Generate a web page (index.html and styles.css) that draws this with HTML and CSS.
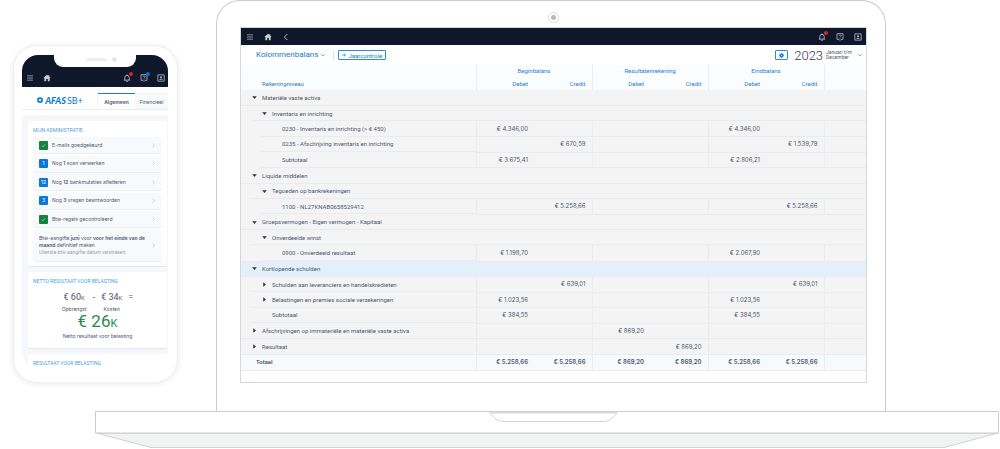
FILE: index.html
```html
<!DOCTYPE html>
<html lang="nl">
<head>
    <meta charset="UTF-8">
    <meta name="viewport" content="width=device-width, initial-scale=1.0">
    <title>AFAS SB+ Kolommenbalans</title>
    <link rel="stylesheet" href="styles.css">
</head>
<body>
    <!-- shared icons -->
    <svg class="sprite" width="0" height="0">
        <symbol id="i-menu" viewBox="0 0 24 24"><path d="M3 5.500h18M3 12h18M3 18.500h18" fill="none" stroke="currentColor" stroke-width="2"/></symbol>
        <symbol id="i-home" viewBox="0 0 24 24"><path d="M12 2 1 12h3v9.500h5.500V15h5v6.500H20V12h3l-4-3.700V3.500h-3v2.100z" fill="currentColor"/></symbol>
        <symbol id="i-back" viewBox="0 0 24 24"><path d="M16 3 7 12l9 9" fill="none" stroke="currentColor" stroke-width="2.500"/></symbol>
        <symbol id="i-next" viewBox="0 0 24 24"><path d="m8 3 9 9-9 9" fill="none" stroke="currentColor" stroke-width="2.500"/></symbol>
        <symbol id="i-down" viewBox="0 0 24 24"><path d="m2 7 10 10L22 7" fill="none" stroke="currentColor" stroke-width="4"/></symbol>
        <symbol id="i-bell" viewBox="0 0 24 24"><path d="M2.500 18.500h19M5.500 18v-7.500a6.500 6.500 0 0 1 13 0V18M12 4V1.500M9.500 22h5" fill="none" stroke="currentColor" stroke-width="2.400"/></symbol>
        <symbol id="i-help" viewBox="0 0 24 24"><path d="M3 2h18v17h-5.500L12 22.500 8.500 19H3z" fill="none" stroke="currentColor" stroke-width="2.200"/><path d="M9 8.500c0-4 6.500-4 6.500-.3 0 2.500-3.300 2.300-3.300 5M12.200 15v2" fill="none" stroke="currentColor" stroke-width="2"/></symbol>
        <symbol id="i-user" viewBox="0 0 24 24"><path d="M2.500 2.500h19v19h-19z" fill="none" stroke="currentColor" stroke-width="2.200"/><circle cx="12" cy="9.500" r="2.800" fill="currentColor"/><path d="M7 17.500c0-4.500 10-4.500 10 0z" fill="currentColor"/></symbol>
        <symbol id="i-check" viewBox="0 0 24 24"><path d="m4 13 5 5L20 6" fill="none" stroke="currentColor" stroke-width="2.500"/></symbol>
        <symbol id="i-arrow" viewBox="0 0 24 24"><path d="M1 12h19M12 4l9 8-9 8" fill="none" stroke="currentColor" stroke-width="4"/></symbol>
        <symbol id="i-gear" viewBox="0 0 24 24"><circle cx="12" cy="12" r="6.500" fill="none" stroke="currentColor" stroke-width="7"/><path d="M12 0v5M12 19v5M0 12h5M19 12h5M3.500 3.500 7 7M17 17l3.500 3.500M20.500 3.500 17 7M7 17l-3.500 3.500" stroke="currentColor" stroke-width="3.500"/></symbol>
        <symbol id="i-open" viewBox="0 0 24 24"><path d="M1 6h22L12 19z" fill="currentColor"/></symbol>
        <symbol id="i-closed" viewBox="0 0 24 24"><path d="M6 1v22l13-11z" fill="currentColor"/></symbol>
    </svg>

    <div class="devices">
        <div class="phone">
            <div class="phone-screen">
                <header class="phone-nav">
                    <div class="notch"><span class="speaker"></span><span class="lens"></span></div>
                    <nav class="nav-icons">
                        <button class="icon-btn" aria-label="Menu"><svg><use href="#i-menu"/></svg></button>
                        <button class="icon-btn" aria-label="Home"><svg><use href="#i-home"/></svg></button>
                        <span class="spacer"></span>
                        <button class="icon-btn" aria-label="Meldingen"><svg><use href="#i-bell"/></svg><span class="dot red"></span></button>
                        <button class="icon-btn" aria-label="Help"><svg><use href="#i-help"/></svg><span class="dot blue"></span></button>
                        <button class="icon-btn" aria-label="Profiel"><svg><use href="#i-user"/></svg></button>
                    </nav>
                </header>
                <div class="tabs">
                    <div class="logo">
                        <svg viewBox="0 0 24 24"><circle cx="12" cy="12" r="8.500" fill="none" stroke="currentColor" stroke-width="6"/><path d="M12 0v6M12 18v6M2 6l5 3M17 15l5 3M22 6l-5 3M7 15l-5 3" stroke="currentColor" stroke-width="3"/><circle cx="12" cy="12" r="2" fill="currentColor"/></svg>
                        <strong>AFAS</strong><span>SB+</span>
                    </div>
                    <button class="tab active">Algemeen</button>
                    <button class="tab">Financieel</button>
                </div>
                <main class="feed">
                    <section class="card">
                        <h2>MIJN ADMINISTRATIE</h2>
                        <div class="tasks">
                            <button class="task"><span class="badge done"><svg><use href="#i-check"/></svg></span><span class="task-text">E-mails goedgekeurd</span><svg class="chev"><use href="#i-next"/></svg></button>
                            <button class="task"><span class="badge">1</span><span class="task-text">Nog <b>1</b> scan verwerken</span><svg class="chev"><use href="#i-next"/></svg></button>
                            <button class="task"><span class="badge">12</span><span class="task-text">Nog <b>12</b> bankmutaties afletteren</span><svg class="chev"><use href="#i-next"/></svg></button>
                            <button class="task"><span class="badge">3</span><span class="task-text">Nog <b>3</b> vragen beantwoorden</span><svg class="chev"><use href="#i-next"/></svg></button>
                            <button class="task"><span class="badge done"><svg><use href="#i-check"/></svg></span><span class="task-text">Btw-regels gecontroleerd</span><svg class="chev"><use href="#i-next"/></svg></button>
                            <button class="task tall"><span class="task-text">Btw-aangifte <b>juni</b> voor <b>voor het einde van de</b><br><b>maand</b> definitief maken<small>Uiterste btw aangifte datum verstreken.</small></span><svg class="chev"><use href="#i-next"/></svg></button>
                        </div>
                    </section>
                    <section class="card result">
                        <h2>NETTO RESULTAAT VOOR BELASTING</h2>
                        <div class="sum">
                            <div><p class="amount">€ 60<small>K</small></p><p>Opbrengst</p></div>
                            <span class="amount">-</span>
                            <div><p class="amount">€ 34<small>K</small></p><p>Kosten</p></div>
                            <span class="amount">=</span>
                        </div>
                        <p class="total">€ 26<small>K</small></p>
                        <p>Netto resultaat voor belasting</p>
                    </section>
                    <section class="card">
                        <h2>RESULTAAT VOOR BELASTING</h2>
                    </section>
                </main>
            </div>
        </div>

        <div class="lid">
            <span class="camera"></span>
            <div class="screen">
                <nav class="nav-icons desktop-nav">
                    <button class="icon-btn" aria-label="Menu"><svg><use href="#i-menu"/></svg></button>
                    <button class="icon-btn" aria-label="Home"><svg><use href="#i-home"/></svg></button>
                    <button class="icon-btn" aria-label="Terug"><svg><use href="#i-back"/></svg></button>
                    <span class="spacer"></span>
                    <button class="icon-btn" aria-label="Meldingen"><svg><use href="#i-bell"/></svg><span class="dot red"></span></button>
                    <button class="icon-btn" aria-label="Help"><svg><use href="#i-help"/></svg></button>
                    <button class="icon-btn" aria-label="Profiel"><svg><use href="#i-user"/></svg></button>
                </nav>
                <div class="toolbar">
                    <button class="title">Kolommenbalans <svg><use href="#i-down"/></svg></button>
                    <button class="outline"><svg><use href="#i-arrow"/></svg>Jaarcontrole</button>
                    <span class="spacer"></span>
                    <button class="outline gear" aria-label="Instellingen"><svg><use href="#i-gear"/></svg></button>
                    <button class="period"><span class="year">2023</span><span class="months">Januari t/m<br>December</span><svg><use href="#i-down"/></svg></button>
                </div>
                <table>
                    <colgroup><col class="c-name"><col><col><col><col><col><col><col class="c-end"></colgroup>
                    <thead>
                        <tr><th></th><th colspan="2" class="group">Beginbalans</th><th colspan="2" class="group">Resultatenrekening</th><th colspan="2" class="group">Eindbalans</th><th></th></tr>
                        <tr><th class="name">Rekeningniveau</th><th>Debet</th><th>Credit</th><th>Debet</th><th>Credit</th><th>Debet</th><th>Credit</th><th></th></tr>
                    </thead>
                    <tbody>
                        <tr><td class="l1" colspan="8"><button class="toggle"><svg><use href="#i-open"/></svg>Materiële vaste activa</button></td></tr>
                        <tr><td class="l2" colspan="8"><button class="toggle"><svg><use href="#i-open"/></svg>Inventaris en inrichting</button></td></tr>
                        <tr><td class="l3">0230 - Inventaris en inrichting (&gt; € 450)</td><td>€ 4.346,00</td><td></td><td></td><td></td><td>€ 4.346,00</td><td></td><td></td></tr>
                        <tr><td class="l3">0235 - Afschrijving inventaris en inrichting</td><td></td><td>€ 670,59</td><td></td><td></td><td></td><td>€ 1.539,79</td><td></td></tr>
                        <tr><td class="l3">Subtotaal</td><td>€ 3.675,41</td><td></td><td></td><td></td><td>€ 2.806,21</td><td></td><td></td></tr>
                        <tr><td class="l1" colspan="8"><button class="toggle"><svg><use href="#i-open"/></svg>Liquide middelen</button></td></tr>
                        <tr><td class="l2" colspan="8"><button class="toggle"><svg><use href="#i-open"/></svg>Tegoeden op bankrekeningen</button></td></tr>
                        <tr><td class="l3">1100 - NL27KNAB0658529412</td><td></td><td>€ 5.258,66</td><td></td><td></td><td></td><td>€ 5.258,66</td><td></td></tr>
                        <tr><td class="l1" colspan="8"><button class="toggle"><svg><use href="#i-open"/></svg>Groepsvermogen - Eigen vermogen - Kapitaal</button></td></tr>
                        <tr><td class="l2" colspan="8"><button class="toggle"><svg><use href="#i-open"/></svg>Onverdeelde winst</button></td></tr>
                        <tr><td class="l3">0900 - Onverdeeld resultaat</td><td>€ 1.198,70</td><td></td><td></td><td></td><td>€ 2.067,90</td><td></td><td></td></tr>
                        <tr class="selected"><td class="l1" colspan="8"><button class="toggle"><svg><use href="#i-open"/></svg>Kortlopende schulden</button></td></tr>
                        <tr><td class="l2"><button class="toggle"><svg><use href="#i-closed"/></svg>Schulden aan leveranciers en handelskredieten</button></td><td></td><td>€ 639,01</td><td></td><td></td><td></td><td>€ 639,01</td><td></td></tr>
                        <tr><td class="l2"><button class="toggle"><svg><use href="#i-closed"/></svg>Belastingen en premies sociale verzekeringen</button></td><td>€ 1.023,56</td><td></td><td></td><td></td><td>€ 1.023,56</td><td></td><td></td></tr>
                        <tr><td class="l2 sub">Subtotaal</td><td>€ 384,55</td><td></td><td></td><td></td><td>€ 384,55</td><td></td><td></td></tr>
                        <tr><td class="l1"><button class="toggle"><svg><use href="#i-closed"/></svg>Afschrijvingen op immateriële en materiële vaste activa</button></td><td></td><td></td><td>€ 869,20</td><td></td><td></td><td></td><td></td></tr>
                        <tr><td class="l1"><button class="toggle"><svg><use href="#i-closed"/></svg>Resultaat</button></td><td></td><td></td><td></td><td>€ 869,20</td><td></td><td></td><td></td></tr>
                        <tr class="grand"><td>Totaal</td><td>€ 5.258,66</td><td>€ 5.258,66</td><td>€ 869,20</td><td>€ 869,20</td><td>€ 5.258,66</td><td>€ 5.258,66</td><td></td></tr>
                    </tbody>
                </table>
            </div>
        </div>
    </div>

    <!-- laptop base with opening notch and bevelled underside -->
    <svg class="base" viewBox="0 0 904 38" preserveAspectRatio="none">
        <path d="M1 22 56 36.500H849L903 22z" fill="#f1f3f2" stroke="#d2d2d2"/>
        <path d="M.5.500h903v21.500H.5z" fill="#fff" stroke="#cbcbcb"/>
        <path d="M395 1.500h127" stroke="#d9d9d9" stroke-width="2"/>
        <path d="M395 2c4 5 8 8.500 14 8.500h99c6 0 10-3 14-8.500" fill="none" stroke="#d2d2d2"/>
    </svg>
</body>
</html>
```
FILE: styles.css
```css
* {
    box-sizing: border-box;
}
body {
    margin: 0;
    background-color: #fff;
    font-family: Inter, "Liberation Sans", sans-serif;
    font-size: 6px;
    color: #4c566d;
}
button {
    margin: 0;
    padding: 0;
    border: none;
    background: none;
    font: inherit;
    color: inherit;
    cursor: pointer;
}
h2, p {
    margin: 0;
    font-weight: normal;
}
svg {
    display: block;
}
.sprite {
    position: absolute;
}
.spacer {
    flex: 1;
}
.devices {
    display: flex;
    align-items: flex-start;
    gap: 38px;
    padding: 0 114px 0 13px;
}

/* phone */
.phone {
    flex: none;
    width: 165px;
    margin-top: 45px;
    padding: 9px 9px 14px 8px;
    border: 1px solid #eee;
    border-radius: 24px;
    box-shadow: 0 1px 6px rgba(0, 0, 0, 0.09);
}
.phone-screen {
    height: 313px;
    overflow: hidden;
    border-radius: 16px;
    background-color: #fff;
}
.phone-nav {
    height: 32px;
    background-color: #0f172b;
}
.notch {
    display: flex;
    align-items: center;
    justify-content: center;
    gap: 5px;
    width: 82px;
    height: 12px;
    margin: 0 auto;
    padding: 0 0 4px 12px;
    border-radius: 0 0 9px 9px;
    background-color: #fff;
}
.speaker {
    width: 21px;
    height: 3px;
    border-radius: 2px;
    background-color: #eee;
}
.lens {
    width: 5px;
    height: 5px;
    border-radius: 50%;
    background-color: #e8e8e8;
}
.nav-icons {
    display: flex;
    align-items: center;
    gap: 9px;
    padding: 7px 3px 0 4px;
    color: #c9ccd3;
}
.icon-btn {
    position: relative;
}
.icon-btn svg {
    width: 8px;
    height: 8px;
}
.dot {
    position: absolute;
    top: -2px;
    right: -2px;
    width: 4px;
    height: 4px;
    border-radius: 50%;
}
.red {
    background-color: #e0202c;
}
.blue {
    background-color: #0a6fd0;
}
.tabs {
    display: flex;
    align-items: flex-end;
    height: 23px;
    border-bottom: 1px solid #e8ebef;
}
.logo {
    display: flex;
    flex: 1;
    align-items: center;
    justify-content: center;
    gap: 1px;
    height: 18px;
    font-family: Lato, sans-serif;
    font-size: 9px;
    color: #0a78d8;
}
.logo svg {
    width: 6px;
    height: 6px;
    margin-right: 1px;
}
.logo strong {
    font-weight: 900;
    font-style: italic;
}
.tab {
    width: 33px;
    height: 16px;
    border-top: 1px solid #eef1f5;
    background-color: #f7f9fb;
    font-size: 5px;
    white-space: nowrap;
}
.tab.active {
    width: 37px;
    border-top-color: #1180d8;
    background-color: #fff;
    box-shadow: -1px 0 #eef1f5, 1px 0 #eef1f5;
    font-weight: 600;
}
.feed {
    display: flex;
    flex-direction: column;
    gap: 6px;
    margin-top: 5px;
    padding: 6px 1px 0 6px;
    background-color: #f5f7fa;
}
.card {
    height: 145px;
    padding: 6px 5px;
    border-radius: 2px;
    background-color: #fff;
    box-shadow: 0 1px 1px rgba(20, 40, 80, 0.07);
}
.card h2 {
    font-family: Roboto, sans-serif;
    font-size: 5px;
    line-height: 7px;
    color: #4b9fdc;
}
.tasks {
    display: flex;
    flex-direction: column;
    justify-content: space-between;
    height: 124px;
    margin-top: 3px;
}
.task {
    display: flex;
    align-items: center;
    gap: 4px;
    height: 16px;
    padding: 0 6px;
    border-radius: 3px;
    background-color: #f8f9fb;
    box-shadow: 0 1px 1px rgba(20, 40, 80, 0.08);
    font-size: 5px;
    line-height: 7px;
    text-align: left;
}
.task.tall {
    height: 31px;
}
.task-text {
    flex: 1;
}
.task b {
    font-weight: 600;
}
.task small {
    display: block;
    font-family: Roboto, sans-serif;
    font-size: 5px;
    color: #9aa1b0;
}
.badge {
    display: flex;
    align-items: center;
    justify-content: center;
    min-width: 9px;
    height: 9px;
    border-radius: 1px;
    background-color: #0a78d8;
    color: #fff;
}
.badge.done {
    background-color: #16823c;
}
.badge svg, .chev {
    width: 5px;
    height: 5px;
}
.chev {
    color: #a8aebb;
}
.result {
    height: 76px;
    font-size: 5px;
    line-height: 8px;
    text-align: center;
}
.result h2 {
    text-align: left;
}
.sum {
    display: flex;
    justify-content: center;
    gap: 6px;
    margin-top: 5px;
}
.sum .amount {
    font-family: Roboto, sans-serif;
    font-size: 9px;
    line-height: 14px;
}
.sum .amount small {
    font-size: 6px;
}
.total {
    font-family: Roboto, sans-serif;
    font-size: 17px;
    line-height: 17px;
    color: #258b48;
}
.total small {
    font-size: 11px;
}

/* laptop */
.lid {
    flex: 1;
    height: 411px;
    padding: 11px 18px 0 23px;
    border: 1px solid #ccc;
    border-bottom: none;
    border-radius: 24px 24px 0 0;
    font-family: Roboto, sans-serif;
}
.camera {
    display: block;
    width: 11px;
    height: 11px;
    margin: 0 auto 4px;
    border: 1px solid #ddd;
    border-radius: 50%;
    background: radial-gradient(#bbb 2px, #fff 3px);
}
.screen {
    padding-bottom: 11px;
    border: 1px solid #d8d8d8;
    background-color: #fff;
}
.desktop-nav {
    gap: 10px;
    height: 17px;
    padding: 0 4px 0 5px;
    background-color: #0f172b;
}
.toolbar {
    display: flex;
    align-items: center;
    height: 20px;
    padding: 0 4px 0 15px;
    color: #1279cf;
}
.toolbar svg {
    width: 4px;
    height: 4px;
}
.title {
    display: flex;
    align-items: center;
    gap: 3px;
    margin-right: 4px;
    padding-right: 8px;
    border-right: 1px solid #dde3ea;
    font-size: 8px;
    line-height: 10px;
}
.outline {
    display: flex;
    align-items: center;
    justify-content: center;
    gap: 2px;
    height: 10px;
    padding: 0 3px;
    border: 1px solid #2a8bdc;
    border-radius: 1px;
}
.gear {
    width: 13px;
    padding: 0;
}
.gear svg {
    width: 5px;
    height: 5px;
}
.period {
    display: flex;
    align-items: center;
    gap: 3px;
    margin-left: 6px;
    text-align: left;
}
.year {
    font-size: 13px;
    font-weight: 300;
    color: #343c50;
}
.months {
    margin-right: 3px;
    font-size: 5px;
    line-height: 5px;
    color: #4c566d;
}
table {
    width: 100%;
    table-layout: fixed;
    border-collapse: collapse;
}
.c-name {
    width: 235px;
}
.c-end {
    width: 42px;
}
thead {
    height: 25px;
    background-color: #fafcfe;
    color: #2a7fd0;
}
tbody {
    height: 280px;
    background-color: #f4f4f4;
}
tbody tr {
    height: 15px;
}
th, td {
    padding: 0 6px 0 0;
    font-weight: inherit;
    line-height: 8px;
    text-align: right;
    white-space: nowrap;
}
th {
    font-weight: normal;
}
th.group {
    padding: 0;
    text-align: center;
}
th.name {
    padding-left: 21px;
    text-align: left;
}
/* column group dividers */
th.group, th:last-child, td:nth-child(2n), th:nth-child(2n) {
    border-left: 1px solid #e9edf3;
}
td {
    border-bottom: 1px solid #e8ebef;
    font-family: Inter, sans-serif;
}
td:first-child {
    font-family: Roboto, sans-serif;
    text-align: left;
}
.l1 {
    padding-left: 11px;
}
/* nested rows start their line at the indent */
td.l2, td.l3 {
    border-bottom: none;
    background: linear-gradient(#e8ebef, #e8ebef) no-repeat 100% 100% / calc(100% - 10px) 1px;
}
td.l2 {
    padding-left: 21px;
}
td.l3 {
    padding-left: 41px;
    background-size: calc(100% - 20px) 1px;
}
td.sub {
    padding-left: 31px;
}
.toggle {
    display: flex;
    align-items: center;
    gap: 5px;
}
.toggle svg {
    width: 5px;
    height: 5px;
    color: #28324a;
}
.selected {
    background-color: #e3f0fb;
}
.grand {
    background-color: #f7fafd;
    font-weight: 600;
}
.grand td:first-child {
    padding-left: 15px;
}
.base {
    width: calc(100% - 96px);
    height: 38px;
    margin-left: 95px;
}
```
